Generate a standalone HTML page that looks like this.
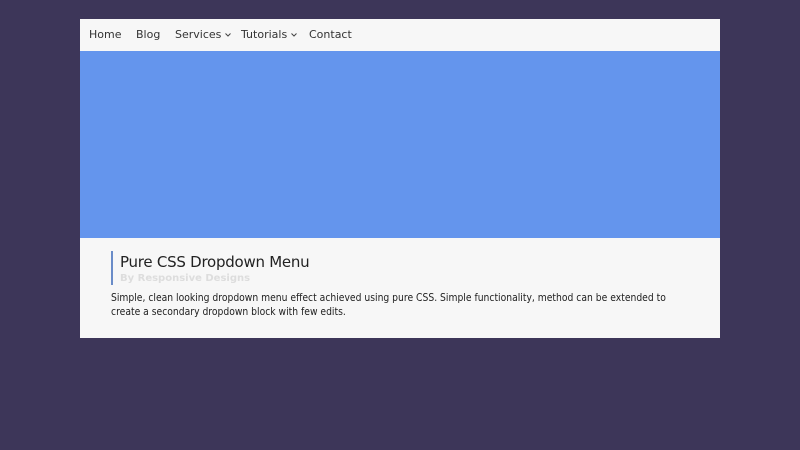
<!DOCTYPE html>
<html><head><style>
body{margin:0;width:800px;height:450px;background:#3d3659;font-family:"DejaVu Sans","Liberation Sans",sans-serif;overflow:hidden}
.card{position:absolute;left:80px;top:19px;width:640px;height:319px;background:#f7f7f7}
.nav{height:32px;position:relative;font-size:11px;color:#333}
.nav span{position:absolute;top:9px;white-space:nowrap}
.nav svg{margin-left:4px;vertical-align:1px}
.hero{height:187px;background:#6495ed}
.t{position:absolute;left:31px;top:232px;border-left:2px solid #6a8cc8;padding-left:7px;height:34px}
.t h1{margin:0;font-size:15px;font-weight:normal;color:#222;line-height:20px;margin-top:1px;letter-spacing:-0.25px}
.t div{font-size:10px;color:#ddd;font-weight:bold;line-height:13px}
.p{position:absolute;left:31px;top:272px;font-size:10.3px;color:#222;line-height:14px;white-space:nowrap;transform:scaleX(0.895);transform-origin:0 0}
</style></head><body>
<div class="card">
<div class="nav">
<span style="left:9px">Home</span>
<span style="left:56px">Blog</span>
<span style="left:95px">Services<svg width="6" height="4" viewBox="0 0 6 4"><path d="M0.5 0.5L3 3L5.5 0.5" fill="none" stroke="#444" stroke-width="1"/></svg></span>
<span style="left:161px">Tutorials<svg width="6" height="4" viewBox="0 0 6 4"><path d="M0.5 0.5L3 3L5.5 0.5" fill="none" stroke="#444" stroke-width="1"/></svg></span>
<span style="left:229px">Contact</span>
</div>
<div class="hero"></div>
<div class="t"><h1>Pure CSS Dropdown Menu</h1><div>By Responsive Designs</div></div>
<div class="p">Simple, clean looking dropdown menu effect achieved using pure CSS. Simple functionality, method can be extended to<br>create a secondary dropdown block with few edits.</div>
</div>
</body></html>
